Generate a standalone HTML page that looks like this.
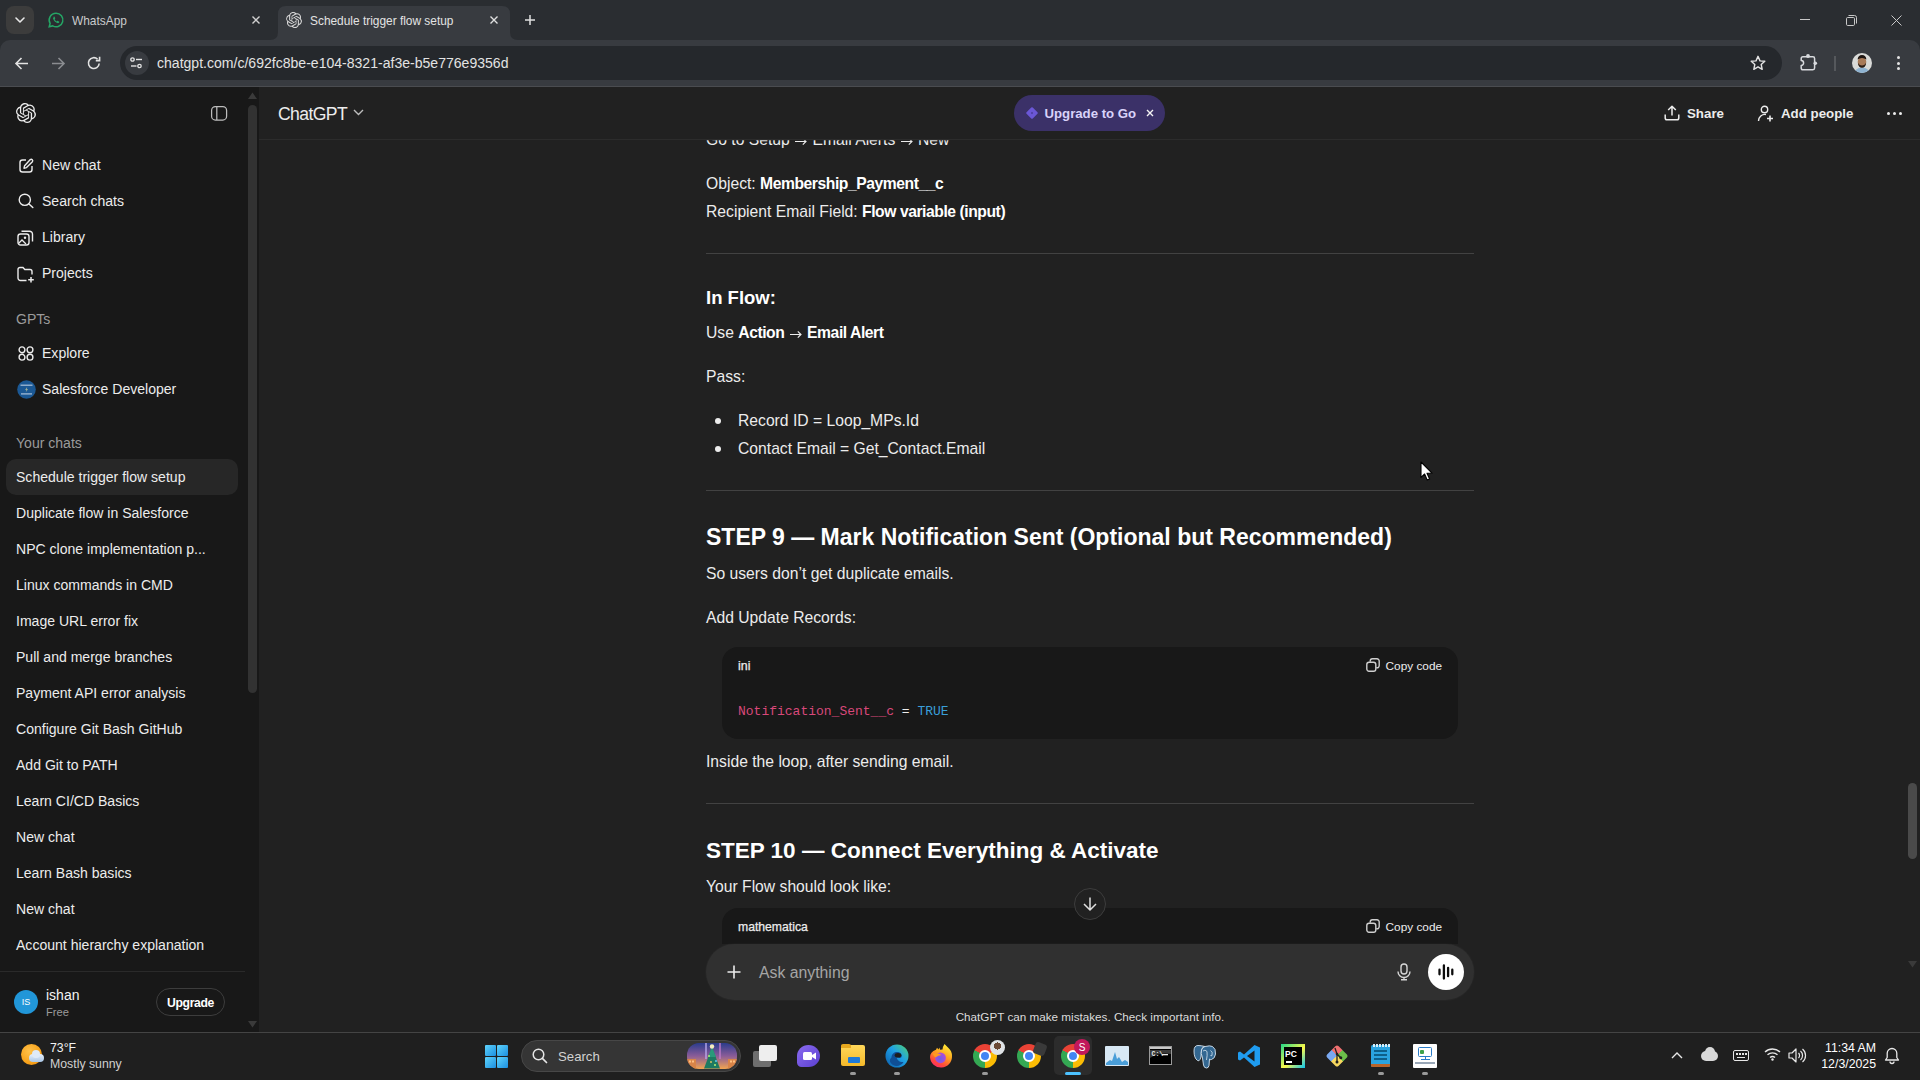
<!DOCTYPE html>
<html><head><meta charset="utf-8"><title>ChatGPT</title>
<style>
html,body{margin:0;padding:0;width:1920px;height:1080px;overflow:hidden;background:#212121;}
body{position:relative;font-family:"Liberation Sans",sans-serif;}
.t{position:absolute;white-space:nowrap;line-height:1;}
.r{position:absolute;}
svg.r{overflow:visible;}
b{letter-spacing:-0.45px;}
</style></head><body>
<div class="r" style="left:0px;top:0px;width:1920px;height:50px;background:#2a2d31;"></div>
<div class="r" style="left:6px;top:6px;width:28px;height:28px;background:#3c3c3c;border-radius:8px;"></div>
<svg class="r" style="left:14px;top:16px;" width="12" height="8" viewBox="0 0 12 8"><path d="M2 2 L6 6 L10 2" stroke="#e8e8e8" stroke-width="1.6" fill="none" stroke-linecap="round" stroke-linejoin="round"/></svg>
<svg class="r" style="left:48px;top:12px;" width="16" height="16" viewBox="0 0 16 16"><path d="M8 1.2a6.8 6.8 0 0 0-5.9 10.2L1.2 14.8l3.5-.9A6.8 6.8 0 1 0 8 1.2z" fill="none" stroke="#25a565" stroke-width="1.5"/><path d="M5.6 4.6c.3-.2.7-.2.9.1l.7 1.3c.1.3 0 .6-.2.8l-.4.4c.4.9 1.1 1.7 2.1 2.2l.4-.4c.2-.2.5-.3.8-.1l1.2.7c.3.2.3.6.1.9-.5.7-1.3.9-2 .6-1.9-.8-3.3-2.2-4-4-.3-.8 0-1.7.6-2.2z" fill="#25a565"/></svg>
<div class="t" style="left:72px;top:15.93px;font-size:11.9px;font-weight:400;color:#c9cacc;font-family:'Liberation Sans', sans-serif;">WhatsApp</div>
<svg class="r" style="left:252px;top:16px;" width="8" height="8" viewBox="0 0 8 8"><path d="M0.5 0.5 L7.5 7.5 M7.5 0.5 L0.5 7.5" stroke="#d0d0d0" stroke-width="1.4"/></svg>
<svg class="r" style="left:270px;top:6px" width="248" height="34" viewBox="0 0 248 34"><path d="M0 34 Q8 34 8 26 L8 8 Q8 0 16 0 L232 0 Q240 0 240 8 L240 26 Q240 34 248 34 Z" fill="#383b40"/></svg>
<svg class="r" style="left:286px;top:12px;" width="16" height="16" viewBox="0 0 16 16"><g transform="scale(0.6667)"><path fill="#d8d8d8" d="M22.28 9.82a5.98 5.98 0 0 0-.52-4.91 6.05 6.05 0 0 0-6.51-2.9A6.07 6.07 0 0 0 4.98 4.18a5.98 5.98 0 0 0-4 2.9 6.05 6.05 0 0 0 .74 7.1 5.98 5.98 0 0 0 .51 4.91 6.05 6.05 0 0 0 6.52 2.9A5.98 5.98 0 0 0 13.26 24a6.06 6.06 0 0 0 5.77-4.21 5.99 5.99 0 0 0 4-2.9 6.06 6.06 0 0 0-.75-7.07zm-9.02 12.61a4.48 4.48 0 0 1-2.88-1.04l.14-.08 4.78-2.76a.8.8 0 0 0 .39-.68v-6.74l2.02 1.17a.07.07 0 0 1 .04.05v5.58a4.5 4.5 0 0 1-4.49 4.5zm-9.66-4.13a4.47 4.47 0 0 1-.53-3.01l.14.09 4.78 2.76a.77.77 0 0 0 .78 0l5.84-3.37v2.33a.08.08 0 0 1-.03.06l-4.83 2.79a4.5 4.5 0 0 1-6.14-1.65zM2.34 7.9a4.49 4.49 0 0 1 2.37-1.97V11.6a.77.77 0 0 0 .39.68l5.81 3.35-2.02 1.17a.08.08 0 0 1-.07 0l-4.83-2.79A4.5 4.5 0 0 1 2.34 7.87zm16.6 3.86-5.83-3.39 2.02-1.16a.08.08 0 0 1 .07 0l4.83 2.79a4.49 4.49 0 0 1-.68 8.1v-5.68a.79.79 0 0 0-.41-.67zm2.01-3.02-.14-.09-4.77-2.78a.78.78 0 0 0-.79 0L9.41 9.23V6.9a.07.07 0 0 1 .03-.06l4.83-2.79a4.5 4.5 0 0 1 6.68 4.66zM8.31 12.86 6.29 11.7a.08.08 0 0 1-.04-.06V6.07a4.5 4.5 0 0 1 7.38-3.45l-.14.08L8.71 5.46a.8.8 0 0 0-.39.68zm1.1-2.37 2.6-1.5 2.6 1.5v3l-2.6 1.5-2.6-1.5z"/></g></svg>
<div class="t" style="left:310px;top:15.93px;font-size:11.9px;font-weight:400;color:#e3e3e3;font-family:'Liberation Sans', sans-serif;">Schedule trigger flow setup</div>
<svg class="r" style="left:490px;top:16px;" width="8" height="8" viewBox="0 0 8 8"><path d="M0.5 0.5 L7.5 7.5 M7.5 0.5 L0.5 7.5" stroke="#e0e0e0" stroke-width="1.4"/></svg>
<svg class="r" style="left:525px;top:15px;" width="10" height="10" viewBox="0 0 10 10"><path d="M5 0 V10 M0 5 H10" stroke="#e0e0e0" stroke-width="1.5"/></svg>
<div class="r" style="left:1800px;top:19px;width:10px;height:1px;background:#c8c8c8;"></div>
<svg class="r" style="left:1846px;top:15px;" width="11" height="11" viewBox="0 0 11 11"><rect x="0.5" y="2.5" width="8" height="8" rx="1.2" fill="none" stroke="#c8c8c8" stroke-width="1"/><path d="M2.5 0.5 H8.5 Q10.5 0.5 10.5 2.5 V8.5" fill="none" stroke="#c8c8c8" stroke-width="1"/></svg>
<svg class="r" style="left:1891px;top:15px;" width="11" height="11" viewBox="0 0 11 11"><path d="M0.5 0.5 L10.5 10.5 M10.5 0.5 L0.5 10.5" stroke="#c8c8c8" stroke-width="1"/></svg>
<div class="r" style="left:0px;top:40px;width:1920px;height:47px;background:#383b40;border-top-left-radius:10px;border-top-right-radius:10px;"></div>
<div class="r" style="left:0px;top:86px;width:1920px;height:1px;background:#4a4c50;"></div>
<svg class="r" style="left:15px;top:57px;" width="14" height="13" viewBox="0 0 14 13"><path d="M13 6.5 H1.5 M6.5 1 L1 6.5 L6.5 12" stroke="#e3e3e3" stroke-width="1.6" fill="none"/></svg>
<svg class="r" style="left:51px;top:57px;" width="14" height="13" viewBox="0 0 14 13"><path d="M1 6.5 H12.5 M7.5 1 L13 6.5 L7.5 12" stroke="#8a8c90" stroke-width="1.6" fill="none"/></svg>
<svg class="r" style="left:87px;top:56px;" width="14" height="14" viewBox="0 0 14 14"><path d="M12.2 7.5 A5.4 5.4 0 1 1 10.6 3.2" stroke="#e3e3e3" stroke-width="1.6" fill="none"/><path d="M12.6 0.8 V4.6 H8.8" stroke="#e3e3e3" stroke-width="1.6" fill="none"/></svg>
<div class="r" style="left:120px;top:46px;width:1662px;height:34px;background:#25282c;border-radius:17px;"></div>
<div class="r" style="left:125px;top:51px;width:24px;height:24px;background:#383b40;border-radius:12px;"></div>
<svg class="r" style="left:130px;top:57px;" width="14" height="12" viewBox="0 0 14 12"><circle cx="2.5" cy="2.5" r="1.7" fill="none" stroke="#e3e3e3" stroke-width="1.3"/><path d="M6 2.5 H12" stroke="#e3e3e3" stroke-width="1.4"/><circle cx="9.5" cy="9" r="1.7" fill="none" stroke="#e3e3e3" stroke-width="1.3"/><path d="M1 9 H6.5" stroke="#e3e3e3" stroke-width="1.4"/></svg>
<div class="t" style="left:157px;top:56.11px;font-size:14.05px;font-weight:400;color:#e3e3e3;font-family:'Liberation Sans', sans-serif;">chatgpt.com/c/692fc8be-e104-8321-af3e-b5e776e9356d</div>
<svg class="r" style="left:1750px;top:55px;" width="16" height="16" viewBox="0 0 16 16"><path d="M8 1.3 L10 5.9 L14.8 6.3 L11.2 9.5 L12.2 14.3 L8 11.8 L3.8 14.3 L4.8 9.5 L1.2 6.3 L6 5.9 Z" fill="none" stroke="#e3e3e3" stroke-width="1.4" stroke-linejoin="round"/></svg>
<svg class="r" style="left:1799px;top:53px;" width="19" height="19" viewBox="0 0 19 19"><path d="M3.9 3.8 H13.9 Q15.6 3.8 15.6 5.5 V15.1 Q15.6 16.8 13.9 16.8 H3.9 Q2.2 16.8 2.2 15.1 V12.4 A2.4 2.4 0 0 0 2.2 7.6 V5.5 Q2.2 3.8 3.9 3.8 Z" fill="none" stroke="#d8dadd" stroke-width="1.5" stroke-linejoin="round"/><circle cx="9" cy="3" r="1.9" fill="#d8dadd"/><circle cx="16.3" cy="10.2" r="1.8" fill="#d8dadd"/></svg>
<div class="r" style="left:1834px;top:56px;width:2px;height:15px;background:#55585c;"></div>
<svg class="r" style="left:1852px;top:53px" width="20" height="20" viewBox="0 0 20 20"><defs><clipPath id="avc"><circle cx="10" cy="10" r="10"/></clipPath></defs><g clip-path="url(#avc)"><rect width="20" height="20" fill="#d9dad8"/><path d="M2 20 Q4 14.5 10 14.5 Q16 14.5 18 20 Z" fill="#8fb3d1"/><ellipse cx="10" cy="9" rx="4.3" ry="5.3" fill="#a87a58"/><path d="M5.6 6.5 Q6 2 10 2 Q14 2 14.4 6.5 Q12.5 5 10 5 Q7.5 5 5.6 6.5 Z" fill="#1f1612"/><path d="M5.9 9.5 Q6.3 14.8 10 14.8 Q13.7 14.8 14.1 9.5 Q13 12.5 10 12.5 Q7 12.5 5.9 9.5 Z" fill="#2a1d16"/></g></svg>
<div class="r" style="left:1896.5px;top:55.8px;width:3px;height:3px;background:#e3e3e3;border-radius:50%;"></div>
<div class="r" style="left:1896.5px;top:61.5px;width:3px;height:3px;background:#e3e3e3;border-radius:50%;"></div>
<div class="r" style="left:1896.5px;top:67.2px;width:3px;height:3px;background:#e3e3e3;border-radius:50%;"></div>
<div class="r" style="left:0px;top:87px;width:259px;height:945px;background:#181818;"></div>
<svg class="r" style="left:248px;top:92px;" width="9" height="7" viewBox="0 0 9 7"><path d="M4.5 0.5 L9 7 H0 Z" fill="#3a3a3a"/></svg>
<div class="r" style="left:248px;top:105px;width:9px;height:588px;background:#323232;border-radius:5px;"></div>
<svg class="r" style="left:248px;top:1021px;" width="9" height="7" viewBox="0 0 9 7"><path d="M0 0 H9 L4.5 6.5 Z" fill="#3a3a3a"/></svg>
<svg class="r" style="left:16px;top:103px;" width="20" height="20" viewBox="0 0 20 20"><g transform="scale(0.8333)"><path fill="#ececec" d="M22.28 9.82a5.98 5.98 0 0 0-.52-4.91 6.05 6.05 0 0 0-6.51-2.9A6.07 6.07 0 0 0 4.98 4.18a5.98 5.98 0 0 0-4 2.9 6.05 6.05 0 0 0 .74 7.1 5.98 5.98 0 0 0 .51 4.91 6.05 6.05 0 0 0 6.52 2.9A5.98 5.98 0 0 0 13.26 24a6.06 6.06 0 0 0 5.77-4.21 5.99 5.99 0 0 0 4-2.9 6.06 6.06 0 0 0-.75-7.07zm-9.02 12.61a4.48 4.48 0 0 1-2.880-1.04l.14-.08 4.78-2.76a.8.8 0 0 0 .39-.68v-6.74l2.02 1.170a.07.07 0 0 1 .04.05v5.58a4.5 4.5 0 0 1-4.49 4.5zm-9.66-4.13a4.47 4.47 0 0 1-.53-3.01l.14.09 4.78 2.76a.77.77 0 0 0 .78 0l5.84-3.37v2.33a.08.08 0 0 1-.03.06l-4.83 2.79a4.5 4.5 0 0 1-6.14-1.65zM2.34 7.9a4.49 4.49 0 0 1 2.37-1.97V11.6a.77.77 0 0 0 .39.68l5.81 3.35-2.02 1.17a.08.08 0 0 1-.07 0l-4.83-2.79A4.5 4.5 0 0 1 2.34 7.87zm16.6 3.86-5.83-3.39 2.02-1.16a.08.08 0 0 1 .07 0l4.83 2.79a4.49 4.49 0 0 1-.68 8.1v-5.68a.79.79 0 0 0-.41-.67zm2.01-3.02-.14-.09-4.77-2.78a.78.78 0 0 0-.79 0L9.41 9.23V6.9a.07.07 0 0 1 .03-.06l4.830-2.79a4.5 4.5 0 0 1 6.68 4.66zM8.31 12.86 6.29 11.7a.08.08 0 0 1-.04-.06V6.07a4.5 4.5 0 0 1 7.38-3.45l-.14.08L8.71 5.46a.8.8 0 0 0-.39.68zm1.1-2.37 2.6-1.5 2.6 1.5v3l-2.6 1.5-2.6-1.5z"/></g></svg>
<svg class="r" style="left:210px;top:105px;" width="18" height="16" viewBox="0 0 18 16"><rect x="1.6" y="1.6" width="15" height="13.4" rx="3.8" fill="none" stroke="#bdbdbd" stroke-width="1.25"/><path d="M6.8 1.6 V15" stroke="#bdbdbd" stroke-width="1.25"/></svg>
<svg class="r" style="left:18px;top:158px;" width="16" height="16" viewBox="0 0 16 16"><path d="M8 2 H4.5 A2.5 2.5 0 0 0 2 4.5 V11.5 A2.5 2.5 0 0 0 4.5 14 H11.5 A2.5 2.5 0 0 0 14 11.5 V8" fill="none" stroke="#ececec" stroke-width="1.4"/><path d="M12.3 1.6 A1.5 1.5 0 0 1 14.4 3.7 L8.5 9.6 L6 10.2 L6.6 7.7 Z" fill="none" stroke="#ececec" stroke-width="1.4" stroke-linejoin="round"/></svg>
<div class="t" style="left:42px;top:158.11px;font-size:14.05px;font-weight:400;color:#ececec;font-family:'Liberation Sans', sans-serif;">New chat</div>
<svg class="r" style="left:18px;top:193.3px;" width="16" height="15" viewBox="0 0 16 15"><circle cx="6.8" cy="6.8" r="5.6" fill="none" stroke="#ececec" stroke-width="1.4"/><path d="M11 11 L14.8 14.5" stroke="#ececec" stroke-width="1.5" stroke-linecap="round"/></svg>
<div class="t" style="left:42px;top:194.11px;font-size:14.05px;font-weight:400;color:#ececec;font-family:'Liberation Sans', sans-serif;">Search chats</div>
<svg class="r" style="left:17px;top:230px;" width="17" height="16" viewBox="0 0 17 16"><rect x="1" y="4" width="11" height="11" rx="2.5" fill="none" stroke="#ececec" stroke-width="1.4"/><path d="M4.5 1.2 H12.5 A3 3 0 0 1 15.5 4.2 V11.5" fill="none" stroke="#ececec" stroke-width="1.4"/><circle cx="8" cy="7.8" r="1.2" fill="#ececec"/><path d="M1.5 13.5 L5 10 L9 14" fill="none" stroke="#ececec" stroke-width="1.3"/></svg>
<div class="t" style="left:42px;top:230.11px;font-size:14.05px;font-weight:400;color:#ececec;font-family:'Liberation Sans', sans-serif;">Library</div>
<svg class="r" style="left:17px;top:266px;" width="18" height="17" viewBox="0 0 18 17"><path d="M9.5 14.5 H3.5 A2.5 2.5 0 0 1 1 12 V3.5 A2 2 0 0 1 3 1.5 H6 L7.8 3.5 H13 A2 2 0 0 1 15 5.5 V8.5" fill="none" stroke="#ececec" stroke-width="1.4"/><path d="M14 11 V16.5 M11.2 13.8 H16.8" stroke="#ececec" stroke-width="1.5"/></svg>
<div class="t" style="left:42px;top:266.11px;font-size:14.05px;font-weight:400;color:#ececec;font-family:'Liberation Sans', sans-serif;">Projects</div>
<div class="t" style="left:16px;top:312.11px;font-size:14.05px;font-weight:400;color:#9b9b9b;font-family:'Liberation Sans', sans-serif;">GPTs</div>
<svg class="r" style="left:18px;top:346px;" width="16" height="15" viewBox="0 0 16 15"><circle cx="4" cy="3.8" r="2.9" fill="none" stroke="#ececec" stroke-width="1.4"/><circle cx="12" cy="3.8" r="2.9" fill="none" stroke="#ececec" stroke-width="1.4"/><circle cx="4" cy="11.2" r="2.9" fill="none" stroke="#ececec" stroke-width="1.4"/><circle cx="12" cy="11.2" r="2.9" fill="none" stroke="#ececec" stroke-width="1.4"/></svg>
<div class="t" style="left:42px;top:346.11px;font-size:14.05px;font-weight:400;color:#ececec;font-family:'Liberation Sans', sans-serif;">Explore</div>
<svg class="r" style="left:16.5px;top:379.5px;" width="19" height="19" viewBox="0 0 19 19"><circle cx="9.5" cy="9.5" r="9.3" fill="#1b5894"/><rect x="3.5" y="4.6" width="12" height="1.2" fill="#cfdcea" opacity="0.8"/><rect x="4" y="13.3" width="11" height="1.2" fill="#cfdcea" opacity="0.8"/><path d="M10.3 7 L8.2 9.8 H9.7 L8.7 12.2 L10.9 9.2 H9.4 Z" fill="#d9d59a"/></svg>
<div class="t" style="left:42px;top:382.11px;font-size:14.05px;font-weight:400;color:#ececec;font-family:'Liberation Sans', sans-serif;">Salesforce Developer</div>
<div class="t" style="left:16px;top:436.11px;font-size:14.05px;font-weight:400;color:#9b9b9b;font-family:'Liberation Sans', sans-serif;">Your chats</div>
<div class="r" style="left:6px;top:459px;width:232px;height:36px;background:#272727;border-radius:10px;"></div>
<div class="t" style="left:16px;top:470.11px;font-size:14.05px;font-weight:400;color:#ececec;font-family:'Liberation Sans', sans-serif;">Schedule trigger flow setup</div>
<div class="t" style="left:16px;top:506.11px;font-size:14.05px;font-weight:400;color:#ececec;font-family:'Liberation Sans', sans-serif;">Duplicate flow in Salesforce</div>
<div class="t" style="left:16px;top:542.11px;font-size:14.05px;font-weight:400;color:#ececec;font-family:'Liberation Sans', sans-serif;">NPC clone implementation p...</div>
<div class="t" style="left:16px;top:578.11px;font-size:14.05px;font-weight:400;color:#ececec;font-family:'Liberation Sans', sans-serif;">Linux commands in CMD</div>
<div class="t" style="left:16px;top:614.11px;font-size:14.05px;font-weight:400;color:#ececec;font-family:'Liberation Sans', sans-serif;">Image URL error fix</div>
<div class="t" style="left:16px;top:650.11px;font-size:14.05px;font-weight:400;color:#ececec;font-family:'Liberation Sans', sans-serif;">Pull and merge branches</div>
<div class="t" style="left:16px;top:686.11px;font-size:14.05px;font-weight:400;color:#ececec;font-family:'Liberation Sans', sans-serif;">Payment API error analysis</div>
<div class="t" style="left:16px;top:722.11px;font-size:14.05px;font-weight:400;color:#ececec;font-family:'Liberation Sans', sans-serif;">Configure Git Bash GitHub</div>
<div class="t" style="left:16px;top:758.11px;font-size:14.05px;font-weight:400;color:#ececec;font-family:'Liberation Sans', sans-serif;">Add Git to PATH</div>
<div class="t" style="left:16px;top:794.11px;font-size:14.05px;font-weight:400;color:#ececec;font-family:'Liberation Sans', sans-serif;">Learn CI/CD Basics</div>
<div class="t" style="left:16px;top:830.11px;font-size:14.05px;font-weight:400;color:#ececec;font-family:'Liberation Sans', sans-serif;">New chat</div>
<div class="t" style="left:16px;top:866.11px;font-size:14.05px;font-weight:400;color:#ececec;font-family:'Liberation Sans', sans-serif;">Learn Bash basics</div>
<div class="t" style="left:16px;top:902.11px;font-size:14.05px;font-weight:400;color:#ececec;font-family:'Liberation Sans', sans-serif;">New chat</div>
<div class="t" style="left:16px;top:938.11px;font-size:14.05px;font-weight:400;color:#ececec;font-family:'Liberation Sans', sans-serif;">Account hierarchy explanation</div>
<div class="r" style="left:0px;top:971px;width:245px;height:1px;background:#2a2a2a;"></div>
<div class="r" style="left:14px;top:990px;width:24px;height:24px;border-radius:50%;background:#2196d8;"></div>
<div class="t" style="left:-474px;width:1000px;text-align:center;top:998.38px;font-size:9px;font-weight:400;color:#ffffff;font-family:'Liberation Sans', sans-serif;">IS</div>
<div class="t" style="left:46px;top:987.65px;font-size:14px;font-weight:400;color:#f4f4f4;font-family:'Liberation Sans', sans-serif;">ishan</div>
<div class="t" style="left:46px;top:1006.52px;font-size:11.2px;font-weight:400;color:#9b9b9b;font-family:'Liberation Sans', sans-serif;">Free</div>
<div class="r" style="left:156px;top:988px;width:69px;height:28px;background:transparent;border:1px solid #3d3d3d;border-radius:15px;box-sizing:border-box;"></div>
<div class="t" style="left:-309.5px;width:1000px;text-align:center;top:996.67px;font-size:12.2px;font-weight:700;color:#ffffff;font-family:'Liberation Sans', sans-serif;letter-spacing:-0.35px;">Upgrade</div>
<div class="r" style="left:259px;top:139px;width:1661px;height:1px;background:#2c2c2c;"></div>
<div class="t" style="left:278px;top:106.40px;font-size:17.6px;font-weight:400;color:#ececec;font-family:'Liberation Sans', sans-serif;letter-spacing:-0.6px;">ChatGPT</div>
<svg class="r" style="left:353px;top:109px;" width="11" height="7" viewBox="0 0 11 7"><path d="M1 1 L5.5 5.5 L10 1" stroke="#bdbdbd" stroke-width="1.4" fill="none"/></svg>
<div class="r" style="left:1014px;top:95px;width:151px;height:36px;background:#3b3168;border-radius:18px;"></div>
<svg class="r" style="left:1026px;top:107px;" width="12" height="12" viewBox="0 0 12 12"><path d="M6 1.3 L10.7 6 L6 10.7 L1.3 6 Z" fill="#6b57d6" stroke="#6b57d6" stroke-width="2.2" stroke-linejoin="round"/><path d="M6 4.8 L7.2 6 L6 7.2 L4.8 6 Z" fill="#4a3a9a"/></svg>
<div class="t" style="left:1044.5px;top:106.83px;font-size:13.2px;font-weight:700;color:#d9d3fa;font-family:'Liberation Sans', sans-serif;">Upgrade to Go</div>
<svg class="r" style="left:1146px;top:109px;" width="8" height="8" viewBox="0 0 8 8"><path d="M1 1 L7 7 M7 1 L1 7" stroke="#f4f4f4" stroke-width="1.4"/></svg>
<svg class="r" style="left:1664px;top:105px;" width="16" height="16" viewBox="0 0 16 16"><path d="M8 10.5 V1.5 M4.2 5 L8 1.2 L11.8 5" stroke="#ececec" stroke-width="1.5" fill="none" stroke-linejoin="round"/><path d="M1.2 9.5 V13 A1.8 1.8 0 0 0 3 14.8 H13 A1.8 1.8 0 0 0 14.8 13 V9.5" stroke="#ececec" stroke-width="1.5" fill="none"/></svg>
<div class="t" style="left:1687px;top:106.74px;font-size:13.3px;font-weight:700;color:#ececec;font-family:'Liberation Sans', sans-serif;">Share</div>
<svg class="r" style="left:1757px;top:105px;" width="17" height="17" viewBox="0 0 17 17"><circle cx="7.5" cy="4.5" r="3.2" fill="none" stroke="#ececec" stroke-width="1.4"/><path d="M1.5 16 A6.5 6.5 0 0 1 9 9.5" fill="none" stroke="#ececec" stroke-width="1.4"/><path d="M13 10.5 V16.5 M10 13.5 H16" stroke="#ececec" stroke-width="1.6"/></svg>
<div class="t" style="left:1781px;top:106.74px;font-size:13.3px;font-weight:700;color:#ececec;font-family:'Liberation Sans', sans-serif;">Add people</div>
<div class="r" style="left:1886.5px;top:111.5px;width:3px;height:3px;background:#ececec;border-radius:50%;"></div>
<div class="r" style="left:1892.5px;top:111.5px;width:3px;height:3px;background:#ececec;border-radius:50%;"></div>
<div class="r" style="left:1898.5px;top:111.5px;width:3px;height:3px;background:#ececec;border-radius:50%;"></div>
<div class="t" style="left:706px;top:132.41px;font-size:15.7px;font-weight:400;color:#ececec;font-family:'Liberation Sans', sans-serif;clip-path:inset(7.9px 0 0 0);">Go to Setup <svg width="12" height="8" viewBox="0 0 12 8" style="vertical-align:0px;margin:0 1px"><path d="M0 4.5 H11 M7.8 1.4 L11 4.5 L7.8 7.6" stroke="#ececec" stroke-width="1.15" fill="none"/></svg> Email Alerts <svg width="12" height="8" viewBox="0 0 12 8" style="vertical-align:0px;margin:0 1px"><path d="M0 4.5 H11 M7.8 1.4 L11 4.5 L7.8 7.6" stroke="#ececec" stroke-width="1.15" fill="none"/></svg> New</div>
<div class="t" style="left:706px;top:176.41px;font-size:15.7px;font-weight:400;color:#ececec;font-family:'Liberation Sans', sans-serif;">Object: <b style="color:#fff">Membership_Payment__c</b></div>
<div class="t" style="left:706px;top:204.41px;font-size:15.7px;font-weight:400;color:#ececec;font-family:'Liberation Sans', sans-serif;">Recipient Email Field: <b style="color:#fff">Flow variable (input)</b></div>
<div class="r" style="left:706px;top:253px;width:768px;height:1px;background:#424242;"></div>
<div class="t" style="left:706px;top:289.04px;font-size:18.5px;font-weight:700;color:#fff;font-family:'Liberation Sans', sans-serif;">In Flow:</div>
<div class="t" style="left:706px;top:325.41px;font-size:15.7px;font-weight:400;color:#ececec;font-family:'Liberation Sans', sans-serif;">Use <b style="color:#fff">Action</b> <svg width="12" height="8" viewBox="0 0 12 8" style="vertical-align:0px;margin:0 1px"><path d="M0 4.5 H11 M7.8 1.4 L11 4.5 L7.8 7.6" stroke="#ececec" stroke-width="1.15" fill="none"/></svg> <b style="color:#fff">Email Alert</b></div>
<div class="t" style="left:706px;top:369.41px;font-size:15.7px;font-weight:400;color:#ececec;font-family:'Liberation Sans', sans-serif;">Pass:</div>
<div class="r" style="left:714.5px;top:418px;width:6px;height:6px;background:#ececec;border-radius:50%;"></div>
<div class="t" style="left:738px;top:413.41px;font-size:15.7px;font-weight:400;color:#ececec;font-family:'Liberation Sans', sans-serif;">Record ID = Loop_MPs.Id</div>
<div class="r" style="left:714.5px;top:446px;width:6px;height:6px;background:#ececec;border-radius:50%;"></div>
<div class="t" style="left:738px;top:441.41px;font-size:15.7px;font-weight:400;color:#ececec;font-family:'Liberation Sans', sans-serif;">Contact Email = Get_Contact.Email</div>
<div class="r" style="left:706px;top:490px;width:768px;height:1px;background:#424242;"></div>
<div class="t" style="left:706px;top:526.23px;font-size:23px;font-weight:700;color:#fff;font-family:'Liberation Sans', sans-serif;">STEP 9 — Mark Notification Sent (Optional but Recommended)</div>
<div class="t" style="left:706px;top:566.41px;font-size:15.7px;font-weight:400;color:#ececec;font-family:'Liberation Sans', sans-serif;">So users don’t get duplicate emails.</div>
<div class="t" style="left:706px;top:610.41px;font-size:15.7px;font-weight:400;color:#ececec;font-family:'Liberation Sans', sans-serif;">Add Update Records:</div>
<div class="r" style="left:722px;top:647px;width:736px;height:92px;background:#181818;border-radius:16px;"></div>
<div class="t" style="left:738px;top:660.20px;font-size:12.4px;font-weight:400;color:#ececec;font-family:'Liberation Sans', sans-serif;-webkit-text-stroke:0.25px #ececec;">ini</div>
<svg class="r" style="left:1366px;top:658px;" width="14" height="14" viewBox="0 0 14 14"><rect x="0.8" y="4.2" width="9" height="9" rx="2.2" fill="none" stroke="#cfcfcf" stroke-width="1.4"/><path d="M4.2 3.8 V3 A2.2 2.2 0 0 1 6.4 0.8 H11 A2.2 2.2 0 0 1 13.2 3 V7.6 A2.2 2.2 0 0 1 11 9.8 H10.2" fill="none" stroke="#cfcfcf" stroke-width="1.4"/></svg>
<div class="t" style="left:1385.6px;top:660.69px;font-size:11.82px;font-weight:400;color:#ececec;font-family:'Liberation Sans', sans-serif;">Copy code</div>
<div class="t" style="left:738px;top:704.70px;font-size:13px;font-weight:400;color:#ececec;font-family:'Liberation Mono', monospace;"><span style="color:#d8487a">Notification_Sent__c</span> <span style="color:#ececec">=</span> <span style="color:#3a9ed8">TRUE</span></div>
<div class="t" style="left:706px;top:754.41px;font-size:15.7px;font-weight:400;color:#ececec;font-family:'Liberation Sans', sans-serif;">Inside the loop, after sending email.</div>
<div class="r" style="left:706px;top:803px;width:768px;height:1px;background:#424242;"></div>
<div class="t" style="left:706px;top:839.65px;font-size:22.5px;font-weight:700;color:#fff;font-family:'Liberation Sans', sans-serif;">STEP 10 — Connect Everything &amp; Activate</div>
<div class="t" style="left:706px;top:879.41px;font-size:15.7px;font-weight:400;color:#ececec;font-family:'Liberation Sans', sans-serif;">Your Flow should look like:</div>
<div class="r" style="left:722px;top:908px;width:736px;height:36px;background:#181818;border-top-left-radius:16px;border-top-right-radius:16px;"></div>
<div class="t" style="left:738px;top:921.37px;font-size:12.2px;font-weight:400;color:#ececec;font-family:'Liberation Sans', sans-serif;-webkit-text-stroke:0.25px #ececec;">mathematica</div>
<svg class="r" style="left:1366px;top:919px;" width="14" height="14" viewBox="0 0 14 14"><rect x="0.8" y="4.2" width="9" height="9" rx="2.2" fill="none" stroke="#cfcfcf" stroke-width="1.4"/><path d="M4.2 3.8 V3 A2.2 2.2 0 0 1 6.4 0.8 H11 A2.2 2.2 0 0 1 13.2 3 V7.6 A2.2 2.2 0 0 1 11 9.8 H10.2" fill="none" stroke="#cfcfcf" stroke-width="1.4"/></svg>
<div class="t" style="left:1385.6px;top:921.69px;font-size:11.82px;font-weight:400;color:#ececec;font-family:'Liberation Sans', sans-serif;">Copy code</div>
<div class="r" style="left:1074px;top:888px;width:32px;height:32px;background:#212121;border:1px solid #3d3d3d;border-radius:50%;box-sizing:border-box;"></div>
<svg class="r" style="left:1083px;top:897px;" width="14" height="14" viewBox="0 0 14 14"><path d="M7 0.5 V13 M1 7 L7 13 L13 7" stroke="#e0e0e0" stroke-width="1.5" fill="none" stroke-linejoin="round"/></svg>
<div class="r" style="left:706px;top:944px;width:768px;height:56px;background:#303030;border-radius:28px;box-shadow:0 0 0 1px rgba(255,255,255,0.02);"></div>
<svg class="r" style="left:727px;top:965px;" width="14" height="14" viewBox="0 0 14 14"><path d="M7 0.5 V13.5 M0.5 7 H13.5" stroke="#ececec" stroke-width="1.6"/></svg>
<div class="t" style="left:759px;top:964.63px;font-size:15.8px;font-weight:400;color:#a5a5a5;font-family:'Liberation Sans', sans-serif;">Ask anything</div>
<svg class="r" style="left:1397px;top:963px;" width="14" height="18" viewBox="0 0 14 18"><rect x="4" y="1" width="6" height="10" rx="3" fill="none" stroke="#d6d6d6" stroke-width="1.4"/><path d="M1 8.5 A6 6 0 0 0 13 8.5 M7 14.5 V16.8 M4 16.8 H10" fill="none" stroke="#d6d6d6" stroke-width="1.4"/></svg>
<div class="r" style="left:1428px;top:954px;width:36px;height:36px;background:#ffffff;border-radius:50%;"></div>
<svg class="r" style="left:1438px;top:964px;" width="16" height="16" viewBox="0 0 16 16"><path d="M1.5 5.7 V10.3 M5.9 1.5 V14.5 M10.1 3.8 V12.2 M14.3 5.7 V10.3" stroke="#0d0d0d" stroke-width="2.3" stroke-linecap="round"/></svg>
<div class="t" style="left:590px;width:1000px;text-align:center;top:1011.10px;font-size:11.7px;font-weight:400;color:#dcdcdc;font-family:'Liberation Sans', sans-serif;">ChatGPT can make mistakes. Check important info.</div>
<div class="r" style="left:1908px;top:783px;width:9px;height:76px;background:#4a4a4a;border-radius:5px;"></div>
<svg class="r" style="left:1908px;top:961px;" width="9" height="7" viewBox="0 0 9 7"><path d="M0 0 H9 L4.5 6.5 Z" fill="#3a3a3a"/></svg>
<svg class="r" style="left:1419.5px;top:461px;" width="14" height="21" viewBox="0 0 14 21"><path d="M1 1 V16.5 L4.6 13 L7.2 19 L9.6 18 L7 12.2 H12 Z" fill="#ffffff" stroke="#000" stroke-width="1.1" stroke-linejoin="round"/></svg>
<div class="r" style="left:0px;top:1032px;width:1920px;height:48px;background:#1f1f1f;"></div>
<div class="r" style="left:0px;top:1032px;width:1920px;height:1px;background:#444444;"></div>
<div class="r" style="left:21px;top:1044px;width:21px;height:21px;border-radius:50%;background:radial-gradient(circle at 40% 35%, #ffc24a 0%, #f7a21b 60%, #e8870e 100%);"></div>
<div class="r" style="left:29px;top:1054px;width:15px;height:8px;border-radius:5px;background:linear-gradient(#e8f1fb,#a9c6e6);"></div>
<div class="r" style="left:32px;top:1050px;width:8px;height:8px;border-radius:50%;background:#dfeaf7;"></div>
<div class="t" style="left:50px;top:1041.59px;font-size:12.3px;font-weight:400;color:#f2f2f2;font-family:'Liberation Sans', sans-serif;">73°F</div>
<div class="t" style="left:50px;top:1057.59px;font-size:12.3px;font-weight:400;color:#d0d0d0;font-family:'Liberation Sans', sans-serif;">Mostly sunny</div>
<svg class="r" style="left:485px;top:1045px" width="23" height="23" viewBox="0 0 23 23"><defs><linearGradient id="wg" x1="0" y1="0" x2="1" y2="1"><stop offset="0" stop-color="#5fd3fb"/><stop offset="1" stop-color="#1b8fe0"/></linearGradient></defs><rect x="0" y="0" width="11" height="11" rx="1" fill="url(#wg)"/><rect x="12" y="0" width="11" height="11" rx="1" fill="url(#wg)"/><rect x="0" y="12" width="11" height="11" rx="1" fill="url(#wg)"/><rect x="12" y="12" width="11" height="11" rx="1" fill="url(#wg)"/></svg>
<div class="r" style="left:521px;top:1040px;width:220px;height:32px;background:#353535;border:1px solid #474747;border-radius:16px;box-sizing:border-box;"></div>
<svg class="r" style="left:532px;top:1048px;" width="16" height="16" viewBox="0 0 16 16"><circle cx="6.5" cy="6.5" r="5.3" fill="none" stroke="#e6e6e6" stroke-width="1.5"/><path d="M10.4 10.4 L14.5 14.5" stroke="#e6e6e6" stroke-width="1.7" stroke-linecap="round"/></svg>
<div class="t" style="left:558px;top:1049.83px;font-size:13.2px;font-weight:400;color:#d2d2d2;font-family:'Liberation Sans', sans-serif;">Search</div>
<svg class="r" style="left:687px;top:1042.5px" width="50" height="26" viewBox="0 0 50 26"><defs><linearGradient id="xg" x1="0" y1="0" x2="0" y2="1"><stop offset="0" stop-color="#2a3c8c"/><stop offset="0.5" stop-color="#8a5c98"/><stop offset="1" stop-color="#f2a450"/></linearGradient><clipPath id="xc"><rect x="0" y="0" width="50" height="26" rx="12"/></clipPath></defs><g clip-path="url(#xc)"><rect width="50" height="26" fill="url(#xg)"/><rect x="0" y="16" width="9" height="10" fill="#d88448"/><rect x="41" y="16" width="9" height="10" fill="#d88448"/><rect x="2" y="17.5" width="2" height="2" fill="#ffc080"/><rect x="5" y="17.5" width="2" height="2" fill="#ffc080"/><rect x="43" y="17.5" width="2" height="2" fill="#ffc080"/><rect x="46" y="17.5" width="2" height="2" fill="#ffc080"/><rect x="18" y="0" width="2" height="16" fill="#b8a8e8" opacity="0.7"/><rect x="32" y="0" width="2" height="16" fill="#c07ac8" opacity="0.7"/><path d="M25 4 L17 25.5 H33 Z" fill="#1e7a62"/><path d="M25 4 L21 14 H29 Z" fill="#2a9a7a"/><circle cx="25" cy="3.5" r="2.2" fill="#f4ecc0"/><circle cx="22" cy="13" r="1" fill="#a8f070"/><circle cx="29" cy="18" r="1" fill="#60c8f0"/><circle cx="24" cy="19" r="0.9" fill="#e8c860"/><circle cx="28" cy="22" r="1" fill="#b8f070"/></g></svg>
<div class="r" style="left:753px;top:1051px;width:18px;height:16px;background:#6e6e6e;border-radius:2px;"></div>
<div class="r" style="left:759px;top:1045px;width:18px;height:16px;background:#eeeeee;border-radius:2px;"></div>
<div class="r" style="left:797px;top:1045px;width:23px;height:22px;border-radius:50% 50% 50% 20%;background:linear-gradient(135deg,#8b6cf0,#5b3fd0);"></div>
<div class="r" style="left:803px;top:1052px;width:9px;height:8px;background:#ffffff;border-radius:1.5px;"></div>
<svg class="r" style="left:812px;top:1052px;" width="4" height="8" viewBox="0 0 4 8"><path d="M0 3 L4 0.5 V7.5 L0 5 Z" fill="#fff"/></svg>
<div class="r" style="left:841px;top:1045px;width:24px;height:21px;border-radius:2px;background:linear-gradient(#ffd85a,#f5b92a);"></div>
<div class="r" style="left:841px;top:1044px;width:10px;height:4px;background:#e7a81e;border-radius:2px 2px 0 0;"></div>
<div class="r" style="left:848px;top:1057px;width:12px;height:6px;background:#1f7ad8;border-radius:1px;"></div>
<div class="r" style="left:850px;top:1072px;width:6px;height:3px;background:#9a9a9a;border-radius:2px;"></div>
<svg class="r" style="left:885px;top:1044px" width="24" height="24" viewBox="0 0 24 24"><defs><linearGradient id="eg1" x1="0" y1="1" x2="1" y2="0"><stop offset="0" stop-color="#0b5ba8"/><stop offset="0.55" stop-color="#1ea0e6"/><stop offset="1" stop-color="#52d46e"/></linearGradient></defs><circle cx="12" cy="12" r="11.5" fill="url(#eg1)"/><path d="M6.5 13.5 C6.5 9.5 10 7.5 13 8 C16 8.5 17.5 11 16.5 13 C15.5 14.5 12.5 14 11.5 13 C12 16 14.5 18.5 18.5 18 C16.5 21.5 12 23 8 21 C5 19 3.5 16 6.5 13.5 Z" fill="#0f4f96"/><ellipse cx="13" cy="11.3" rx="3.3" ry="2.3" fill="#1d1d1d"/></svg>
<div class="r" style="left:894px;top:1072px;width:6px;height:3px;background:#9a9a9a;border-radius:2px;"></div>
<svg class="r" style="left:928px;top:1042px" width="26" height="26" viewBox="0 0 26 26"><defs><linearGradient id="ffg" x1="0.8" y1="0" x2="0.3" y2="1"><stop offset="0" stop-color="#fff23a"/><stop offset="0.45" stop-color="#ffa51f"/><stop offset="0.8" stop-color="#ff4a3a"/><stop offset="1" stop-color="#ff2a6a"/></linearGradient><radialGradient id="ffp" cx="0.45" cy="0.6" r="0.6"><stop offset="0" stop-color="#6b5ee6"/><stop offset="1" stop-color="#b34ad8"/></radialGradient></defs><path d="M2 15 A11 11 0 1 0 24 14 Q24 9 20.5 6 Q18 3.5 16.5 2 Q14.8 4.5 14.5 7.5 L12 7.8 L11.5 5.5 L10.5 7.5 L9 5.8 L8 7.8 Q2 10 2 15 Z" fill="url(#ffg)"/><circle cx="12.5" cy="15.8" r="5.4" fill="url(#ffp)"/><path d="M4.5 11.5 Q9 10 13.5 13 Q10 13.2 7.5 15.5 Q5.5 14 4.5 11.5 Z" fill="#ff9b1f"/></svg>
<div class="r" style="left:1054px;top:1036px;width:38px;height:39px;background:#2c2c2c;border-radius:5px;"></div>
<div class="r" style="left:973px;top:1044px;width:24px;height:24px;border-radius:50%;background:conic-gradient(from -60deg,#e94235 0 120deg,#fbbc04 120deg 240deg,#34a853 240deg 360deg);"></div>
<div class="r" style="left:979px;top:1050px;width:12px;height:12px;border-radius:50%;background:#4285f4;border:2px solid #fff;box-sizing:border-box;"></div>
<div class="r" style="left:1017px;top:1044px;width:24px;height:24px;border-radius:50%;background:conic-gradient(from -60deg,#e94235 0 120deg,#fbbc04 120deg 240deg,#34a853 240deg 360deg);"></div>
<div class="r" style="left:1023px;top:1050px;width:12px;height:12px;border-radius:50%;background:#4285f4;border:2px solid #fff;box-sizing:border-box;"></div>
<div class="r" style="left:1061px;top:1044px;width:24px;height:24px;border-radius:50%;background:conic-gradient(from -60deg,#e94235 0 120deg,#fbbc04 120deg 240deg,#34a853 240deg 360deg);"></div>
<div class="r" style="left:1067px;top:1050px;width:12px;height:12px;border-radius:50%;background:#4285f4;border:2px solid #fff;box-sizing:border-box;"></div>
<div class="r" style="left:990px;top:1040px;width:15px;height:15px;border-radius:50%;background:radial-gradient(circle at 50% 40%, #6b4a36 0 30%, #dfe3e6 31%);"></div>
<div class="r" style="left:1034px;top:1043px;width:12px;height:12px;border-radius:3px;background:#3a3a3a;transform:rotate(20deg)"></div>
<div class="r" style="left:1074px;top:1039px;width:16px;height:16px;border-radius:50%;background:#c2185b;"></div>
<div class="t" style="left:582px;width:1000px;text-align:center;top:1042.54px;font-size:10px;font-weight:400;color:#fff;font-family:'Liberation Sans', sans-serif;">S</div>
<div class="r" style="left:982px;top:1072px;width:6px;height:3px;background:#9a9a9a;border-radius:2px;"></div>
<div class="r" style="left:1065px;top:1072px;width:16px;height:3px;background:#4cc2ff;border-radius:2px;"></div>
<div class="r" style="left:1105px;top:1046px;width:24px;height:20px;background:#d8e8f4;border-radius:1px;"></div>
<svg class="r" style="left:1106px;top:1048px;" width="22" height="17" viewBox="0 0 22 17"><path d="M0 15 L4 12 L6 13 L9 4 L11 11 L13 9 L16 14 L19 12 L22 14 V17 H0 Z" fill="#4a9ed8"/></svg>
<svg class="r" style="left:1149px;top:1046px" width="23" height="19" viewBox="0 0 23 19"><rect x="0.5" y="0.5" width="22" height="18" fill="#000" stroke="#9a9a9a" stroke-width="1"/><rect x="1" y="1" width="21" height="2" fill="#c8c8c8"/><path d="M1 4 H22 V8 Q10 6 1 12 Z" fill="#3a3a3a"/><text x="2.5" y="9.5" font-family="Liberation Mono" font-size="6.5" font-weight="700" fill="#e8e8e8">C:\</text><rect x="13" y="8" width="6" height="1.3" fill="#e8e8e8"/></svg>
<svg class="r" style="left:1193px;top:1044px" width="24" height="25" viewBox="0 0 24 25"><path d="M5 1.5 Q1 1.5 1 7 Q1 14 4.5 16.5 Q6 17.5 7 15.5 L8 13 Q8 9 8.5 6 Q9 3 12 2.5 Q8 1.5 5 1.5 Z" fill="#336791" stroke="#d6e4f0" stroke-width="0.9"/><path d="M12 2.5 Q17 1.2 19.5 2.5 Q23 4.5 22.5 10 Q22 14.5 18.5 15.5 Q17 16 16.5 15 L16 21.5 Q15.5 24 13.5 24 Q11 24 10.5 21 L9.5 14 Q7.5 9 8.5 6 Q9.5 3 12 2.5 Z" fill="#336791" stroke="#d6e4f0" stroke-width="0.9"/><path d="M10 7 Q12 5 14 7.5 Q14.5 11 13.5 16" fill="none" stroke="#d6e4f0" stroke-width="0.8"/><path d="M17.5 6.5 Q20 7.5 19 11.5 Q18 12.5 17.5 11" fill="none" stroke="#d6e4f0" stroke-width="0.8"/></svg>
<svg class="r" style="left:1237px;top:1044px;" width="24" height="24" viewBox="0 0 24 24"><path d="M17.5 1 L23 3.5 V20.5 L17.5 23 L7 13.5 L3 16.5 L1 15.5 V8.5 L3 7.5 L7 10.5 Z" fill="#1f9cf0"/><path d="M17.5 6.5 V17.5 L10 12 Z" fill="#1d1d1d"/></svg>
<div class="r" style="left:1281px;top:1044px;width:24px;height:24px;background:linear-gradient(135deg,#21d789,#fcf84a 55%,#07c3f2);"></div>
<div class="r" style="left:1284px;top:1047px;width:18px;height:18px;background:#000;"></div>
<div class="t" style="left:1285px;top:1049.80px;font-size:8.5px;font-weight:700;color:#fff;font-family:'Liberation Sans', sans-serif;">PC</div>
<div class="r" style="left:1286px;top:1061px;width:6px;height:1.5px;background:#fff;"></div>
<div class="r" style="left:1329px;top:1048px;width:16px;height:16px;transform:rotate(45deg);background:conic-gradient(#6cc04a 0 90deg,#f7d860 90deg 180deg,#7aa8f0 180deg 270deg,#f07070 270deg 360deg);border-radius:2px;"></div>
<svg class="r" style="left:1330px;top:1045px;" width="14" height="22" viewBox="0 0 14 22"><path d="M5 3 L7 9 V18 M7 9 L10.5 12.5" stroke="#202020" stroke-width="1.3" fill="none"/><circle cx="7" cy="9" r="1.3" fill="#202020"/><circle cx="7" cy="17" r="1.5" fill="#202020"/><circle cx="10.8" cy="12.8" r="1.5" fill="#202020"/></svg>
<div class="r" style="left:1371px;top:1045px;width:19px;height:22px;background:#2aa3e0;border-radius:1.5px;"></div>
<div class="r" style="left:1371px;top:1064px;width:19px;height:3px;background:#b8642a;border-radius:0 0 1.5px 1.5px;"></div>
<div class="r" style="left:1373px;top:1043.5px;width:1.5px;height:3px;background:#d6eefa;"></div>
<div class="r" style="left:1376px;top:1043.5px;width:1.5px;height:3px;background:#d6eefa;"></div>
<div class="r" style="left:1379px;top:1043.5px;width:1.5px;height:3px;background:#d6eefa;"></div>
<div class="r" style="left:1382px;top:1043.5px;width:1.5px;height:3px;background:#d6eefa;"></div>
<div class="r" style="left:1385px;top:1043.5px;width:1.5px;height:3px;background:#d6eefa;"></div>
<div class="r" style="left:1388px;top:1043.5px;width:1.5px;height:3px;background:#d6eefa;"></div>
<div class="r" style="left:1374px;top:1050px;width:13px;height:1.6px;background:#0d5f8a;"></div>
<div class="r" style="left:1374px;top:1054px;width:13px;height:1.6px;background:#0d5f8a;"></div>
<div class="r" style="left:1374px;top:1058px;width:13px;height:1.6px;background:#0d5f8a;"></div>
<div class="r" style="left:1378px;top:1072px;width:6px;height:3px;background:#9a9a9a;border-radius:2px;"></div>
<div class="r" style="left:1413px;top:1044px;width:24px;height:24px;background:#ffffff;border-radius:1px;"></div>
<div class="r" style="left:1418px;top:1047px;width:14px;height:10px;background:#ffffff;border:1.6px solid #2a7cc8;border-radius:1.5px;box-sizing:border-box;"></div>
<div class="r" style="left:1420px;top:1049.5px;width:4px;height:4px;background:#3fa24a;border-radius:1px;"></div>
<div class="r" style="left:1424.5px;top:1057px;width:1.6px;height:2.5px;background:#2a7cc8;"></div>
<div class="r" style="left:1421px;top:1059px;width:9px;height:1.3px;background:#2a7cc8;"></div>
<div class="r" style="left:1415px;top:1062px;width:20px;height:1.5px;background:#9aa8b8;"></div>
<div class="r" style="left:1422px;top:1072px;width:6px;height:3px;background:#9a9a9a;border-radius:2px;"></div>
<svg class="r" style="left:1671px;top:1052px;" width="12" height="7" viewBox="0 0 12 7"><path d="M1 6 L6 1 L11 6" stroke="#e8e8e8" stroke-width="1.4" fill="none"/></svg>
<div class="r" style="left:1701px;top:1051px;width:17px;height:10px;border-radius:6px;background:#d8d8d8;"></div>
<div class="r" style="left:1705px;top:1047px;width:10px;height:10px;border-radius:50%;background:#d8d8d8;"></div>
<div class="r" style="left:1733px;top:1050px;width:16px;height:11px;background:transparent;border:1.3px solid #e8e8e8;border-radius:2px;box-sizing:border-box;"></div>
<div class="r" style="left:1736px;top:1053px;width:1.5px;height:1.5px;background:#e8e8e8;"></div>
<div class="r" style="left:1739px;top:1053px;width:1.5px;height:1.5px;background:#e8e8e8;"></div>
<div class="r" style="left:1742px;top:1053px;width:1.5px;height:1.5px;background:#e8e8e8;"></div>
<div class="r" style="left:1745px;top:1053px;width:1.5px;height:1.5px;background:#e8e8e8;"></div>
<div class="r" style="left:1737px;top:1057px;width:8px;height:1.2px;background:#e8e8e8;"></div>
<svg class="r" style="left:1764px;top:1047px;" width="17" height="14" viewBox="0 0 17 14"><path d="M1 5 A11 11 0 0 1 16 5 M3.5 7.8 A7.5 7.5 0 0 1 13.5 7.8 M6 10.5 A4 4 0 0 1 11 10.5" stroke="#e8e8e8" stroke-width="1.4" fill="none"/><circle cx="8.5" cy="12.5" r="1.2" fill="#e8e8e8"/></svg>
<svg class="r" style="left:1788px;top:1047px;" width="18" height="17" viewBox="0 0 18 17"><path d="M1 6 H4 L8 2 V15 L4 11 H1 Z" fill="none" stroke="#e8e8e8" stroke-width="1.2" stroke-linejoin="round"/><path d="M10.5 6 A3.5 3.5 0 0 1 10.5 11 M12.5 4 A6 6 0 0 1 12.5 13 M14.5 2 A8.5 8.5 0 0 1 14.5 15" stroke="#e8e8e8" stroke-width="1.2" fill="none"/></svg>
<div class="t" style="right:44px;top:1041.59px;font-size:12.3px;font-weight:400;color:#ffffff;font-family:'Liberation Sans', sans-serif;">11:34 AM</div>
<div class="t" style="right:44px;top:1057.59px;font-size:12.3px;font-weight:400;color:#ffffff;font-family:'Liberation Sans', sans-serif;">12/3/2025</div>
<svg class="r" style="left:1884px;top:1047px;" width="16" height="17" viewBox="0 0 16 17"><path d="M8 1.5 A4.8 4.8 0 0 0 3.2 6.3 V10.5 L1.5 13 H14.5 L12.8 10.5 V6.3 A4.8 4.8 0 0 0 8 1.5 Z" fill="none" stroke="#e8e8e8" stroke-width="1.3" stroke-linejoin="round"/><path d="M6 14.5 A2 2 0 0 0 10 14.5" stroke="#e8e8e8" stroke-width="1.3" fill="none"/></svg>
</body></html>
